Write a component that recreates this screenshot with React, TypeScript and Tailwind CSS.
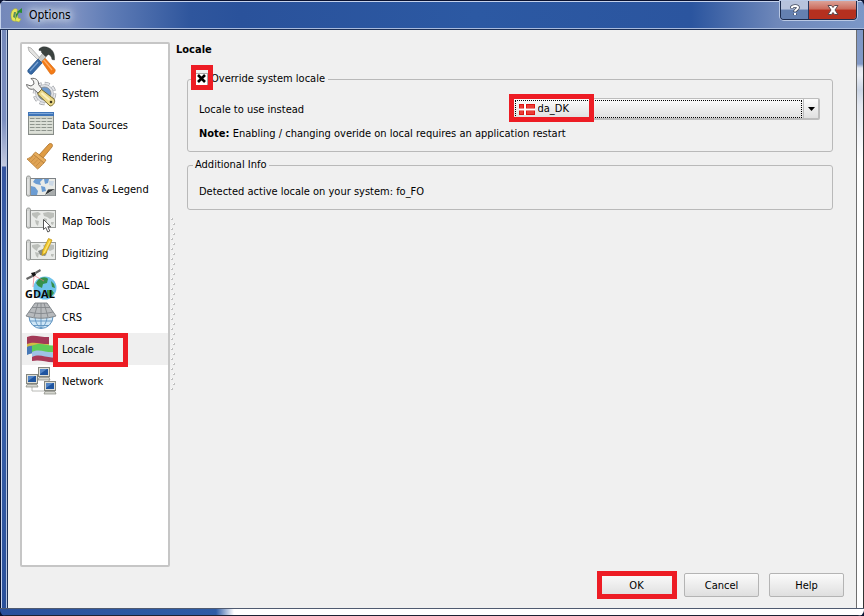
import type { ReactNode } from "react";

function GeneralIcon() {
  return (
    <>
      <path d="M3 2l3 1 9 10-2 2L4 6z" fill="#e4e4e2" stroke="#9d9d9d" strokeWidth=".7" />
      <path d="M15 14l3-3 12 13.500c1 2-2 5.500-4.500 4.500z" fill="#f47b16" stroke="#d9690f" strokeWidth=".7" />
      <path d="M18 14l9 11" stroke="#ffad66" strokeWidth="1.200" />
      <path d="M18 8l4 3-6 6-3-3z" fill="#c9cbc8" stroke="#888" strokeWidth=".6" />
      <path d="M13 14l4 4L7 29c-2 1-5-2-4-4z" fill="#3569a6" stroke="#2a5488" strokeWidth=".8" />
      <path d="M13 17L5 26" stroke="#7fa6d4" strokeWidth="1.200" />
      <path d="M14 4c3-3 7-2.500 10-1 4 2 6 6 5.500 12l-2.500-.5c-.5-3-1.500-4-3.500-5l-3 2-4-4c0-2-1-2-2.500-2z" fill="#3b423f" stroke="#2b312f" strokeWidth=".4" />
    </>
  );
}

function SystemIcon() {
  return (
    <>
      <circle cx="19.500" cy="16.500" r="10" fill="none" stroke="#9a9da2" strokeWidth="3.600" strokeDasharray="4.800 3.050" />
      <circle cx="19.500" cy="16.500" r="10" fill="none" stroke="#e6e7ea" strokeWidth="2.200" strokeDasharray="4 3.850" strokeDashoffset="-.4" />
      <circle cx="19.500" cy="16.500" r="9" fill="#e2e4e8" stroke="#a5a8ae" strokeWidth=".6" />
      <circle cx="19.500" cy="16.500" r="6.500" fill="#6d98cc" stroke="#83868c" strokeWidth=".8" />
      <path d="M6 1.500c5-1 8 2 7.500 6L17 12l-4 4-4.500-4C5 13 2 11 1.500 7.500L6 9l3-2-.5-3z" fill="#f4f4f2" stroke="#6b6b6b" strokeWidth="1" />
      <path d="M12.500 17l4-4.500L29 22c2 3-1 7-4 7z" fill="#ecd98a" stroke="#6f6120" strokeWidth=".9" />
      <path d="M16.500 16l8 7" stroke="#fbf2c2" strokeWidth="2" />
      <circle cx="26" cy="25" r="1.300" fill="#3f3a20" />
    </>
  );
}

function TableIcon() {
  return (
    <>
      <rect x="3.500" y="3.500" width="25" height="22" fill="#d0d4ca" stroke="#878c88" />
      <rect x="3" y="3" width="26" height="4" fill="#3f75b8" />
      <path d="M4 4.500h24" stroke="#7fa8da" />
      <path d="M5 9.500h22M5 12.500h22M5 15.500h22M5 18.500h22M5 21.500h22" stroke="#8e948d" strokeDasharray="4.500 1.300" />
      <path d="M4 11h24M4 14h24M4 17h24M4 20h24M4 23h24" stroke="#eff1ec" strokeWidth=".8" />
    </>
  );
}

function BrushIcon() {
  return (
    <>
      <path d="M23 4c2-3 6-1 4 2l-9 11-4-3z" fill="#df9c44" stroke="#a9712c" strokeWidth=".8" />
      <path d="M10.500 11l10.500 8-2 3-11-8.500z" fill="#e8ad5c" stroke="#b27a32" strokeWidth=".8" />
      <path d="M8.500 13.500l10.500 8.500c-2 2-4 4.500-6.500 6L2 18c2.500-1 4.500-2.500 6.500-4.500z" fill="#dfa354" stroke="#b27c39" strokeWidth=".8" />
      <path d="M8 15l-4 4M10.500 16.500L6 21M13 18.500L8.500 23M15.500 20.500L11 25" stroke="#c58a3f" strokeWidth=".8" />
    </>
  );
}

function MapSheet({ land }: { land: string }) {
  return (
    <>
      <rect x="4.500" y="5.500" width="26" height="17" fill="#e9ebe8" stroke="#999c99" />
      <path d="M7 8l6-1 3 2-3 2-1 3-3-2-2-2zM10 15l4 1-1 5-2-2zM18 8l5-1 6 1v4l-4 2-3-2-3-1zM19 13l3 1-1 5-2-2zM26 17l3 0-1 3-2-1z" fill={land} />
      <path d="M1.500 4.500c0-2 4-2 4 0V22c0 1.500-4 1.500-4 0z" fill="#cfd1cf" stroke="#929492" />
      <path d="M3 6v15" stroke="#f0f0f0" />
    </>
  );
}

function CanvasIcon() {
  return (
    <>
      <rect x="4.500" y="5.500" width="26" height="17" fill="#e9ebe8" stroke="#7d8286" />
      <path d="M10 6h8l-3 3 1 3-5-1-3-2zM19 6h5l-1 4-3 1zM6 13l4 1 3 4-1 4H6zM16 13l4 1 1 4-4 1z" fill="#6b9cd3" />
      <path d="M24 8l5 0-1 5-4-1z" fill="#cbd8e6" />
      <path d="M20 22l3-5.500 7-.5z" fill="#2f3335" />
      <path d="M20 22.500l10-6.500v6.500z" fill="#a7abab" />
      <path d="M1.500 4.500c0-2 4-2 4 0V22c0 1.500-4 1.500-4 0z" fill="#cfd1cf" stroke="#929492" />
      <path d="M3 6v15" stroke="#f0f0f0" />
    </>
  );
}

function MapToolsIcon() {
  return (
    <>
      <MapSheet land="#bcbfba" />
      <path d="M18.500 14.500v10l2.300-2 2 4.500 2-1-2-4.300h3z" fill="#fff" stroke="#444" strokeWidth=".9" />
    </>
  );
}

function DigitizingIcon() {
  return (
    <>
      <MapSheet land="#bcbfba" />
      <path d="M13 14l5-2 4 3-2 4-5-1z" fill="#858984" />
      <path d="M23.500 1.500l3.500 1.500-6 13-4 2.500.5-4.500z" fill="#f3cb2f" stroke="#c49a1c" strokeWidth=".8" />
      <path d="M25 4l-6 12" stroke="#fff0a0" strokeWidth=".8" />
    </>
  );
}

function GdalIcon() {
  return (
    <>
      <circle cx="20" cy="19" r="11.500" fill="#6fc3ea" />
      <path d="M13 11c4-4 9-3 10-1l-1 4-4 1-1 4-4-2-2-3zM26 12l3 3 1 4-3-1zM22 21l5 0 2 3-4 5-3-3z" fill="#35914a" />
      <path d="M9 7L8 18M10 7l9 5" stroke="#e77a86" strokeWidth=".7" />
      <path d="M1 9l6-3 1 2-6 3zM10 3l5-3 1 2-5 3z" fill="#666" />
      <path d="M6 4l4-1 1 3-3 2z" fill="#171717" />
      <text x="0" y="29" fontSize="11" fontWeight="bold" fontFamily="Open Sans, sans-serif" fill="#080808">GDAL</text>
    </>
  );
}

function CrsIcon() {
  return (
    <>
      <circle cx="16" cy="15.500" r="12" fill="#cfe6f6" stroke="#5d92c0" />
      <path d="M5 20h22M8 24.500h16M16 14v13M10 15c0 5 2 10 6 12M22 15c0 5-2 10-6 12" stroke="#5d92c0" fill="none" strokeWidth=".9" />
      <path d="M10 2h12l9 13c-10 3-20 3-30 0z" fill="#b7babd" stroke="#7b8084" strokeWidth=".9" />
      <path d="M7 6.500h18M4 11c8 2 16 2 24 0M13 2l-4 14M19 2l4 14M16 2v15" stroke="#83888c" fill="none" strokeWidth=".9" />
    </>
  );
}

function LocaleIcon() {
  return (
    <>
      <path d="M2 4c7-3 12 0 22 0v8H2z" fill="#a33a58" />
      <path d="M2 11c7-3 12 0 22 0v4H2z" fill="#d1bb46" />
      <path d="M2 14c5-2 8-1 12 0v7c-4-1-8-1-12 1z" fill="#4779b6" />
      <path d="M7 13c9-5 14 1 25-1v7c-11 2-16-3-25 1z" fill="#5fcb58" />
      <path d="M7 19c9-4 14 2 25 0v5c-11 2-16-3-25 1z" fill="#9fc3e6" />
      <path d="M7 24c9-4 14 2 25 0v5c-11 1-16-3-25-1z" fill="#a83a59" />
    </>
  );
}

function Computer({ x, y }: { x: number; y: number }) {
  return (
    <g transform={`translate(${x} ${y})`}>
      <rect x=".5" y=".5" width="11" height="9" fill="#dedfd8" stroke="#85877f" />
      <rect x="2" y="2" width="8" height="6" fill="#1f55a0" />
      <path d="M2 2h7l-7 5z" fill="#5385c6" />
      <path d="M1 10.500h10l1 2.500H0z" fill="#d5d6cf" stroke="#85877f" strokeWidth=".7" />
    </g>
  );
}

function NetworkIcon() {
  return (
    <>
      <path d="M7 17v9h14M24 10v8" stroke="#b9bab6" fill="none" />
      <Computer x={13} y={2} />
      <Computer x={1} y={9} />
      <Computer x={19} y={16} />
    </>
  );
}

const pages: { name: string; icon: ReactNode }[] = [
  { name: "General", icon: <GeneralIcon /> },
  { name: "System", icon: <SystemIcon /> },
  { name: "Data Sources", icon: <TableIcon /> },
  { name: "Rendering", icon: <BrushIcon /> },
  { name: "Canvas & Legend", icon: <CanvasIcon /> },
  { name: "Map Tools", icon: <MapToolsIcon /> },
  { name: "Digitizing", icon: <DigitizingIcon /> },
  { name: "GDAL", icon: <GdalIcon /> },
  { name: "CRS", icon: <CrsIcon /> },
  { name: "Locale", icon: <LocaleIcon /> },
  { name: "Network", icon: <NetworkIcon /> },
];

function Highlight({ className }: { className: string }) {
  return <span aria-hidden className={`pointer-events-none absolute border-[5px] border-[#ed1c24] ${className}`} />;
}

function TitleBar() {
  return (
    <header className="flex h-[30px] items-start border-b border-[#1c2f55] bg-[linear-gradient(to_right,#7488ba_0,#7f93c3_70px,#5f7cb6_110px,#2f569d_190px,#2a529b_240px,#2c59a3_55%,#2b559f_80%,#6f88ba_90%,#7b97c7_100%)] pr-[7px] pl-2 shadow-[inset_0_1px_0_#0a1230,inset_1px_2px_0_#c5d2ec,inset_0_-1px_0_#a9bbdd]">
      <svg className="mt-[7px] h-4 w-4" viewBox="0 0 16 16" aria-hidden>
        <path d="M6 2c3-1 4 0 3 3l1 6 3 1-2 3-3-1c-4 1-5-2-5-6 0-2 1-5 3-6z" fill="#e8e65a" stroke="#a9b23a" strokeWidth=".6" />
        <path d="M6 5h2l-1 6-2-1z" fill="#5d8b62" />
        <path d="M13 2l-4 7-2 5 1-7z" fill="#2f8d35" />
        <path d="M9 5l5-4v5z" fill="#258a30" />
      </svg>
      <h1 className="mt-[7px] ml-[5px] text-[12px] leading-4 text-black [text-shadow:0_0_6px_#fff,0_0_10px_#e8effc,0_0_14px_#e8effc]">Options</h1>
      <div className="mt-px ml-auto flex h-[19px] overflow-hidden rounded-b-[4px] border border-t-0 border-[#1c2b4c] shadow-[0_0_0_1px_#b9c8e4]">
        <button aria-label="What's this" className="flex w-[28px] items-center justify-center border-r border-[#26365c] bg-linear-to-b from-[#b7c3dc] from-45% to-[#6480b0] to-50%">
          <svg className="h-3 w-3" viewBox="0 0 12 12" fill="none" aria-hidden>
            <path d="M3 4.500V3c1-1.500 6-1.500 6 .5S6 5.500 6 8M6 9.500V11" stroke="#454c5e" strokeWidth="3.600" />
            <path d="M3 4V3c1-1.500 6-1.500 6 .5S6 5.500 6 7.500M6 9v2" stroke="#fff" strokeWidth="2" />
          </svg>
        </button>
        <button aria-label="Close" className="flex w-[47px] items-center justify-center bg-linear-to-b from-[#dba298] from-0% via-[#cb6a5b] via-45% to-[#b5301f] to-50%">
          <svg className="h-3 w-[14px]" viewBox="0 0 14 12" aria-hidden>
            <path d="M2 1.500h3.500L7 3.500l1.500-2H12L9 6l3 4.500H8.500L7 8.500l-1.500 2H2L5 6z" fill="#fff" stroke="#58474c" strokeWidth="1" />
          </svg>
        </button>
      </div>
    </header>
  );
}

function PageList() {
  return (
    <nav aria-label="Option pages" className="w-[150px] shrink-0 rounded-[2px] border-2 border-[#c6c6c6] bg-white pt-px">
      <ul>
        {pages.map((page) => (
          <li key={page.name} className={page.name === "Locale" ? "relative bg-[#efefef]" : ""}>
            <button className="flex h-8 w-full items-center gap-[5px] pl-[3px] text-left leading-[18px]">
              <svg className="h-8 w-8 shrink-0" viewBox="0 0 32 32" fill="none" aria-hidden>{page.icon}</svg>
              <span className="pt-[2px] leading-4">{page.name}</span>
            </button>
            {page.name === "Locale" && <Highlight className="top-0 left-[31px] h-[34px] w-[75px]" />}
          </li>
        ))}
      </ul>
    </nav>
  );
}

function Splitter() {
  return (
    <div className="flex w-[6px] shrink-0 items-center pl-[1px]">
      <svg className="h-[174px] w-[4px]" aria-hidden>
        <defs>
          <pattern id="grip" width="4" height="10" patternUnits="userSpaceOnUse">
            <path d="M0 0h2v2H0zM2 5h2v2H2z" fill="#c0c0c0" />
            <path d="M0 0h1v1H0zM2 5h1v1H2z" fill="#fff" />
          </pattern>
        </defs>
        <rect width="4" height="174" fill="url(#grip)" />
      </svg>
    </div>
  );
}

function LocaleSelect() {
  return (
    <div className="relative flex-1">
      <select
        id="locale"
        className="block h-[22px] w-full appearance-none rounded-[2px] border border-r-2 border-b-2 border-[#bdbdbd] bg-linear-to-b from-[#fbfbfb] to-[#e0e0e0] pt-px pl-[25px] leading-4 outline-none"
      >
        <option>da_DK</option>
      </select>
      <span aria-hidden className="pointer-events-none absolute inset-y-[2px] right-[18px] left-[3px] border border-dotted border-black" />
      <span aria-hidden className="pointer-events-none absolute inset-y-px right-px flex w-[16px] items-center justify-center border-l border-[#bdbdbd]">
        <svg className="h-1 w-[7px]" viewBox="0 0 7 4"><path d="M0 0h7L3.500 4z" /></svg>
      </span>
      <svg className="pointer-events-none absolute top-[6px] left-[7px] h-[11px] w-4" viewBox="0 0 16 11" aria-hidden>
        <rect width="16" height="11" fill="#df1410" />
        <path d="M1 1h3v3H1zM8 1h7v3H8zM1 7h3v3H1zM8 7h7v3H8z" fill="#ea3c36" />
        <path d="M5 0h2v11H5zM0 4.500h16v2H0z" fill="#fff" />
      </svg>
      <Highlight className="-top-1 -left-[3px] h-[28px] w-[85px]" />
    </div>
  );
}

function LocalePage() {
  return (
    <section className="min-w-0 flex-1">
      <h2 className="h-[29px] leading-4 font-bold">Locale</h2>
      <div className="mx-[11px] flex flex-col gap-[5px]">
        <fieldset className="rounded-[3px] border border-[#b9b9b9] pr-3 pb-[9px] pl-[11px]">
          <legend className="relative -ml-2 h-4 pr-[3px] pl-1 leading-4">
            <label className="flex h-4 items-center gap-[3px]">
              <input type="checkbox" defaultChecked className="peer h-[13px] w-[13px] appearance-none border border-[#a8a8a8] bg-white" />
              <svg className="pointer-events-none absolute top-[3px] left-[6px] hidden h-[9px] w-[9px] peer-checked:block" viewBox="0 0 9 9" aria-hidden>
                <path d="M1 1l7 7M8 1L1 8" stroke="#000" strokeWidth="2.600" />
              </svg>
              Override system locale
            </label>
            <Highlight className="-top-[6px] left-0 h-[25px] w-[22px]" />
          </legend>
          <div className="mt-[11px] flex items-center gap-1">
            <label htmlFor="locale" className="flex-1 pt-[2px]">Locale to use instead</label>
            <LocaleSelect />
          </div>
          <p className="mt-[6px] leading-4"><b>Note:</b> Enabling / changing overide on local requires an application restart</p>
        </fieldset>
        <fieldset className="rounded-[3px] border border-[#b9b9b9] px-[11px] pb-[9px]">
          <legend className="-ml-[6px] px-[2px] leading-4">Additional Info</legend>
          <p className="mt-[11px] leading-4">Detected active locale on your system: fo_FO</p>
        </fieldset>
      </div>
    </section>
  );
}

const buttonClass = "h-6 w-[75px] rounded-[2px] border border-[#b4b4b4] bg-linear-to-b from-[#fbfbfb] to-[#dfdfdf] pt-[2px]";

export default function App() {
  return (
    <div className="bg-[#0a1230]">
      <div className="flex min-h-screen flex-col overflow-hidden rounded-[6px] text-[11px] leading-4 text-black [font-family:'DejaVu_Sans_Condensed','DejaVu_Sans',sans-serif]">
        <TitleBar />
        <div className="flex flex-1">
          <div className="w-2 shrink-0 bg-[linear-gradient(to_bottom,#7488ba_0,#7c8fc0_90px,#c3cae0_136px,#34549f_137px,#3f68b0_45%,#2a509b_100%)] shadow-[inset_1px_0_0_#0a1230,inset_2px_0_0_#c5d2ec,inset_-1px_0_0_#1c2f55,inset_-2px_0_0_#b4c3e0]" />
          <main className="flex flex-1 flex-col gap-[6px] bg-[#f0f0f0] px-3 pt-3 pb-[11px]">
            <div className="flex flex-1">
              <PageList />
              <Splitter />
              <LocalePage />
            </div>
            <div className="flex justify-end gap-[10px]">
              <span className="relative">
                <button className={buttonClass}>OK</button>
                <Highlight className="-top-[2px] -left-[2px] h-[28px] w-[80px]" />
              </span>
              <button className={buttonClass}>Cancel</button>
              <button className={buttonClass}>Help</button>
            </div>
          </main>
          <div className="w-2 shrink-0 bg-[linear-gradient(to_bottom,#7f97c5_0,#8299c6_34px,#e4e8f0_38px,#eceff5_45px,#cbd5e5_60px,#e4e8f0_75px,#fff_130px)] shadow-[inset_1px_0_0_#6e6e6e,inset_-1px_0_0_#333]" />
        </div>
        <footer className="h-2 shrink-0 bg-[linear-gradient(to_right,#2a509b_0,#2e5ca5_216px,#fff_234px)] shadow-[inset_0_1px_0_#4f5a70,inset_0_-1px_0_#1c2233]" />
      </div>
    </div>
  );
}
